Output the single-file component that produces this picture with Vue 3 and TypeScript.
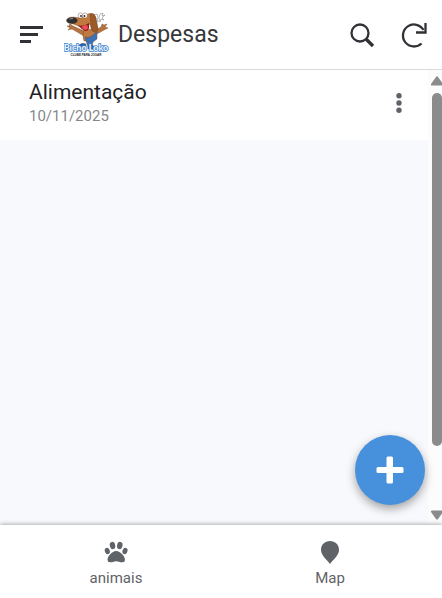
<script setup lang="ts">
interface Expense {
  id: number
  title: string
  date: string
}

const expenses: Expense[] = [{ id: 1, title: 'Alimentação', date: '10/11/2025' }]
</script>

<template>
  <div class="app">
    <header class="bar">
      <button class="icon-btn menu" type="button" aria-label="Menu">
        <svg width="24" height="20" viewBox="0 0 24 20" fill="#303236">
          <path d="M0 1h23v3H0zM0 8h18v3H0zM0 15h11v3H0z" />
        </svg>
      </button>
      <svg class="logo" width="46" height="46" viewBox="0 0 46 46" role="img" aria-label="Bicho Loko">
        <g stroke="#6b4228" stroke-width=".4" stroke-linejoin="round">
          <path d="M20 19 9 14 6 12 5 13 6 14 3 14 6 16 4 18 8 17 20 24Z" fill="#b8733d" />
          <path d="M30 19 37 15 38 12 40 13 43 12 41 15 44 16 40 18 31 23Z" fill="#b8733d" />
          <path d="M20 17Q18 24 20 29L30 28 32 18Z" fill="#c07a40" />
          <path d="M21 25Q27 27 33 19L33 27 29 30 28 35 24 35 22 29Z" fill="#3b72b5" />
          <path d="M14 34Q17 30 22 32V36H14ZM24 34Q29 32 31 35L30 37H24Z" fill="#2164b4" />
          <path d="M4 7Q8 4 16 6L22 3Q29 -1 32 6L34 17Q33 22 29 19L26 12Q20 18 12 13Q7 12 4 7Z" fill="#c07a3c" />
          <path d="M26 2Q32 0 32 8L34 18Q29 22 27 17Z" fill="#9c5a28" />
          <ellipse cx="8" cy="8.500" rx="5.500" ry="3.300" fill="#303034" />
          <ellipse cx="16.500" cy="3.500" rx="2.400" ry="2.600" fill="#fff" />
          <ellipse cx="21" cy="3.500" rx="2.400" ry="2.600" fill="#fff" />
        </g>
        <circle cx="17" cy="4" r=".9" fill="#222" />
        <circle cx="20.500" cy="4" r=".9" fill="#222" />
        <path d="M14 13Q19 15 25 11Q26 20 21 19Q17 17 14 13Z" fill="#8d1f22" />
        <path d="M18 14.500Q24 11 24 16Q22 20 18 16Z" fill="#f04b55" />
        <path d="M5.500 7 9 6.500" stroke="#aaa" stroke-width=".8" />
        <path d="M31 3 33 2 34 5 33 10 35 9M35 6 36 2 39 1 38 4 41 3 38 6 40 8 37 7 36 10Z" fill="#fff" stroke="#999" stroke-width=".7" />
        <text class="brand" x="22" y="39" text-anchor="middle">Bicho Loko</text>
        <text class="tagline" x="22" y="44" text-anchor="middle">CLUBE PARA JOGAR</text>
      </svg>
      <h1 class="title">Despesas</h1>
      <button class="icon-btn search" type="button" aria-label="Pesquisar">
        <svg width="26" height="26" viewBox="0 0 26 26" fill="none" stroke="#303236">
          <circle cx="11" cy="11" r="8.500" stroke-width="2.300" />
          <path d="m17 17 7 7" stroke-width="3.300" />
        </svg>
      </button>
      <button class="icon-btn" type="button" aria-label="Atualizar">
        <svg width="26" height="26" viewBox="0 0 26 26" fill="none" stroke="#303236" stroke-width="2.300">
          <path d="M22.500 8A11 11 0 1 0 20.500 21.500" />
          <path d="M24.500 1v9.500H15" />
        </svg>
      </button>
    </header>

    <div class="body">
      <main class="content">
        <ul class="list">
          <li v-for="item in expenses" :key="item.id" class="row">
            <div>
              <div class="name">{{ item.title }}</div>
              <div class="date">{{ item.date }}</div>
            </div>
            <button class="icon-btn" type="button" aria-label="Opções">
              <svg width="6" height="20" viewBox="0 0 6 20" fill="#5f6368">
                <circle cx="3" cy="2.700" r="2.700" />
                <circle cx="3" cy="10" r="2.700" />
                <circle cx="3" cy="17.300" r="2.700" />
              </svg>
            </button>
          </li>
        </ul>
      </main>
      <div class="scroll" aria-hidden="true">
        <svg width="12" height="10" viewBox="0 0 12 10" fill="#8b8b8b">
          <path d="M5 1Q6-.5 7 1L12 8Q12.500 9.500 11 9.500H1Q-.5 9.500 0 8Z" />
        </svg>
        <div class="track"><div class="thumb"></div></div>
        <svg width="12" height="10" viewBox="0 0 12 10" fill="#8b8b8b">
          <path d="M5 9Q6 10.500 7 9L12 2Q12.500 .5 11 .5H1Q-.5 .5 0 2Z" />
        </svg>
      </div>
      <button class="fab" type="button" aria-label="Adicionar">
        <svg width="28" height="28" viewBox="0 0 28 28" fill="#fff">
          <rect x="10.500" y="0.500" width="6.500" height="27" rx="1.500" />
          <rect x="0.500" y="11" width="27" height="6" rx="1.500" />
        </svg>
      </button>
    </div>

    <nav class="tabs">
      <a class="tab" href="#animais">
        <svg width="24" height="24" viewBox="0 0 24 24" fill="#5f6368">
          <ellipse cx="8.500" cy="5.500" rx="2.700" ry="3.700" transform="rotate(-12 8.500 5.500)" />
          <ellipse cx="15.800" cy="5.500" rx="2.700" ry="3.700" transform="rotate(12 15.800 5.500)" />
          <ellipse cx="3.300" cy="11" rx="2.400" ry="3.200" transform="rotate(-22 3.300 11)" />
          <ellipse cx="21" cy="11" rx="2.400" ry="3.200" transform="rotate(22 21 11)" />
          <path d="M12.200 11C8 11 3.500 16.500 3.500 20Q3.500 22.500 6.500 22.300C9 22.300 10 21.200 12.200 21.200S15.500 22.300 18 22.300Q21 22.500 21 20C21 16.500 16.500 11 12.200 11Z" />
        </svg>
        <span>animais</span>
      </a>
      <a class="tab" href="#map">
        <svg width="24" height="24" viewBox="0 0 24 24" fill="#5f6368">
          <path d="M12 1C6.800 1 3 4.900 3 9.800C3 15 8 19 12 24C16 19 21 15 21 9.800C21 4.900 17.200 1 12 1Z" />
        </svg>
        <span>Map</span>
      </a>
    </nav>
  </div>
</template>

<style>
body {
  margin: 0;
  background: #fff;
}
</style>

<style scoped>
.app {
  display: flex;
  flex-direction: column;
  height: 100vh;
  font-family: Roboto, "Liberation Sans", sans-serif;
  color: #202124;
}
.bar {
  display: flex;
  align-items: center;
  box-sizing: border-box;
  height: 70px;
  padding: 0 15px 0 20px;
  border-bottom: 1px solid #d9dadd;
}
.icon-btn {
  display: flex;
  padding: 0;
  border: 0;
  background: none;
}
.menu {
  margin-right: 20px;
}
.logo {
  margin-right: 8px;
}
.brand {
  font: 900 9px Lato, sans-serif;
  fill: #e6f1fc;
  stroke: #3b7fc9;
  stroke-width: 1.5px;
  paint-order: stroke;
}
.tagline {
  font: 700 3px "Liberation Sans", sans-serif;
  fill: #222;
}
.title {
  flex: 1;
  margin: 0;
  font-size: 23px;
  font-weight: 400;
  line-height: 28px;
  color: #36383b;
}
.search {
  margin-right: 26px;
}
.body {
  position: relative;
  display: flex;
  flex: 1;
  min-height: 0;
}
.content {
  flex: 1;
  background: #f8f9fc;
}
.list {
  margin: 0;
  padding: 0;
  list-style: none;
}
.row {
  display: flex;
  align-items: center;
  justify-content: space-between;
  padding: 9px 26px 13px 29px;
  background: #fff;
}
.name {
  font-size: 21px;
  line-height: 26px;
}
.date {
  font-size: 15px;
  line-height: 22px;
  color: #85878a;
}
.scroll {
  display: flex;
  flex-direction: column;
  align-items: flex-end;
  gap: 7px;
  box-sizing: border-box;
  width: 14px;
  padding: 6px 0 5px;
  overflow: hidden;
  background: #fcfcfc;
}
.scroll svg {
  flex: none;
  margin-right: -1px;
}
.track {
  flex: 1;
  width: 10px;
}
.thumb {
  height: 86%;
  border-radius: 5px;
  background: #8b8b8b;
}
.fab {
  position: absolute;
  right: 17px;
  bottom: 20px;
  display: flex;
  align-items: center;
  justify-content: center;
  width: 70px;
  height: 70px;
  padding: 0;
  border: 0;
  border-radius: 50%;
  background: #4790dc;
  box-shadow: 0 4px 10px rgba(0, 0, 0, 0.35);
}
.tabs {
  position: relative;
  display: flex;
  box-sizing: border-box;
  height: 73px;
  padding: 0 5px 0 9px;
  background: #fff;
  box-shadow: 0 -1px 4px rgba(0, 0, 0, 0.3);
}
.tab {
  display: flex;
  flex: 1;
  flex-direction: column;
  align-items: center;
  gap: 4px;
  padding-top: 15px;
  font-size: 15px;
  line-height: 20px;
  color: #5f6368;
  text-decoration: none;
}
</style>
